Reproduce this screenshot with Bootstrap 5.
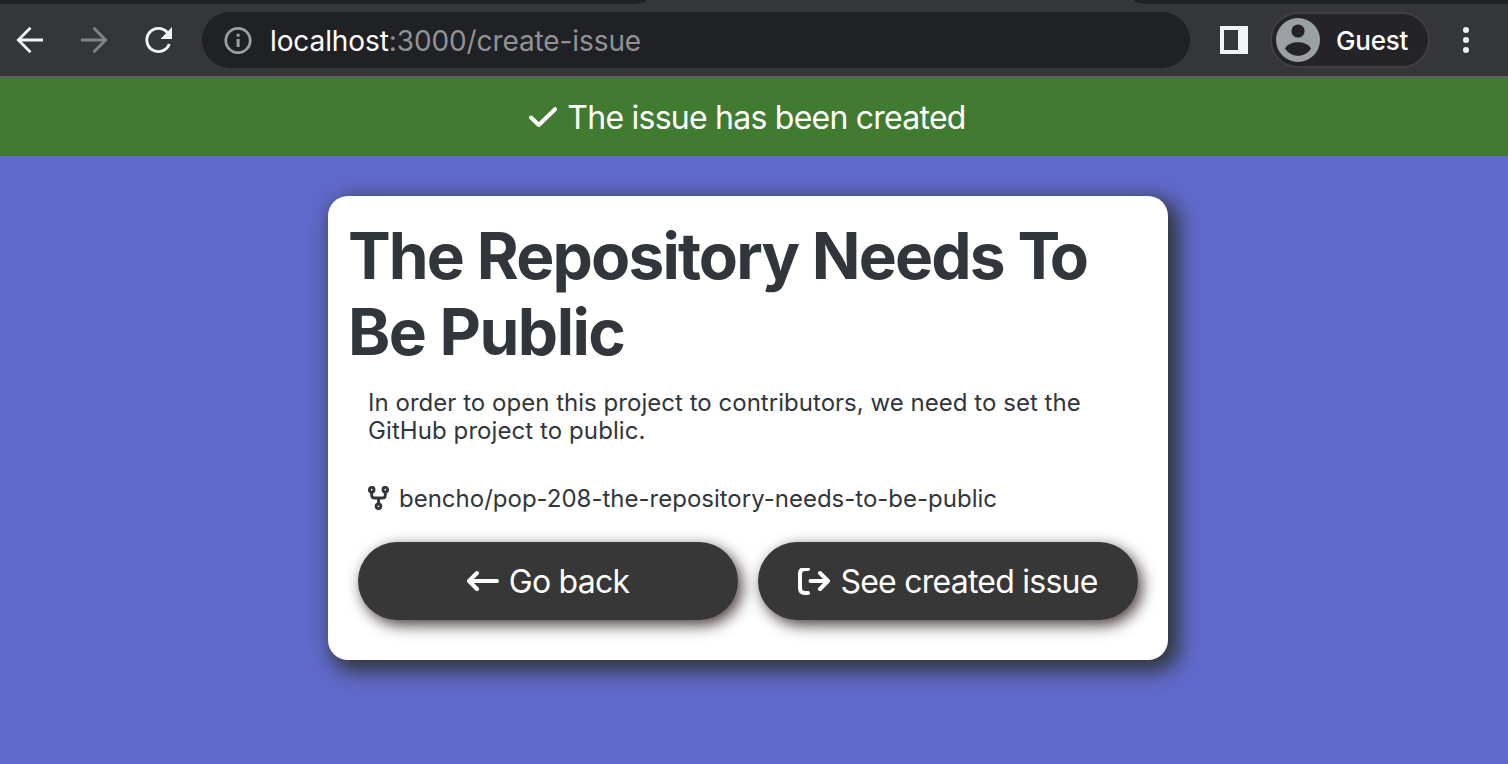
<!DOCTYPE html>
<html lang="en">
<head>
<meta charset="utf-8">
<title>Create issue</title>
<link rel="stylesheet" href="https://cdn.jsdelivr.net/npm/bootstrap@5.3.0/dist/css/bootstrap.min.css">
<style>
body{background:#606aca;font-family:Inter,"Liberation Sans",sans-serif;height:764px}
svg{display:block;flex:none}
.tabstrip{height:4px;background:#35363a}
.tabstrip .side{background:#202124;height:4px}
.side-start{width:646px;border-bottom-right-radius:14px 4px}
.side-end{width:374px;border-bottom-left-radius:14px 4px}
.toolbar{height:74px;background:#35363a;border-bottom:2px solid #5f5f66;padding:8px 36px 0 16px}
.nav-gap{margin-left:36px}
.address{width:988px;height:56px;background:#202124;margin-left:28px;padding-left:22px;color:#919295;font-size:28px;line-height:56px}
.address .host{color:#fff}
.url{margin-left:18px;letter-spacing:-.1px;padding-top:1px}
.panel-icon{margin-left:30px}
.guest{width:160px;height:56px;background:#242328;border:2px solid #403f44;color:#fff;font-size:26px;margin-left:22px;padding-left:4px}
.guest span{margin-left:16px;font-weight:500;letter-spacing:-.2px}
.menu-icon{margin-left:33px}
.label-text{margin-left:10px;letter-spacing:-.76px}
.notice{height:78px;background:#407b31;color:#fff;font-size:32px;line-height:40px;padding:20px 13px 0 0}
.issue{width:840px;height:464px;margin:40px 0 0 328px;border:0;border-radius:20px;color:#30363b;box-shadow:7px 7px 20px 4px #30363b;padding:22px 20px 0}
.issue h1{font-size:64px;line-height:76px;font-weight:700;margin:0;letter-spacing:-1.85px;word-spacing:.4px}
.issue h1 .tight{letter-spacing:-10.500px}
.issue h1 .last-line{letter-spacing:-1.5px}
.issue p{font-size:24px;line-height:28px;margin:19px 0 0 20px;letter-spacing:.03px}
.issue p .last-line{letter-spacing:.08px}
.branch{font-size:24px;line-height:28px;margin:40px 0 0 20px}
.branch svg{margin-bottom:2px}
.branch span{margin-left:10px}
.actions{gap:20px;margin:29px 10px 0}
.action{width:380px;height:78px;background:#373737;color:#fff;font-size:32px;font-weight:400;border:0;box-shadow:4px 5px 15px #4a3c3c;padding:2px 0 0}
.action:hover{background:#444;color:#fff}
</style>
</head>
<body class="overflow-hidden">
<div class="tabstrip d-flex justify-content-between"><div class="side side-start"></div><div class="side side-end"></div></div>
<header class="toolbar d-flex align-items-start">
  <div class="d-flex align-items-center w-100">
    <svg width="28" height="28" fill="none" stroke="#f1f3f4" stroke-width="2.8"><path d="M27 14H3M14.500 1.800 2.300 14l12.200 12.200"/></svg>
    <svg class="nav-gap" width="28" height="28" fill="none" stroke="#828386" stroke-width="2.8"><path d="M1 14h24M13.500 1.800 25.700 14 13.500 26.200"/></svg>
    <svg class="nav-gap" width="30" height="30" fill="none" stroke="#f1f3f4" stroke-width="2.9"><path d="M23.300 7.500A11.600 11.600 0 1 0 25.300 19"/><path d="M28 2v12H16.500z" fill="#f1f3f4" stroke="none"/></svg>
    <div class="address rounded-pill d-flex align-items-center">
      <svg width="28" height="28"><circle cx="14" cy="14.500" r="12.200" fill="none" stroke="#9aa0a6" stroke-width="2.8"/><path d="M12.600 7.800h3v3h-3zM12.600 13h3v8h-3z" fill="#9aa0a6"/></svg>
      <div class="url"><span class="host">localhost</span>:3000/create-issue</div>
    </div>
    <svg class="panel-icon" width="28" height="28"><path fill="#f1f3f4" fill-rule="evenodd" d="M0 0h28v28H0zM4 4v20h14V4z"/></svg>
    <div class="guest rounded-pill d-flex align-items-center">
      <svg width="44" height="44"><circle cx="22" cy="22" r="22" fill="#9aa0a3"/><circle cx="22" cy="13" r="6.600" fill="#242328"/><path fill="#242328" d="M9 30.500C11.500 26 17 24.300 22 24.300s10.500 1.700 13 6.200C32.500 35 27 37.800 22 37.800S11.500 35 9 30.500z"/></svg>
      <span>Guest</span>
    </div>
    <svg class="menu-icon" width="6" height="28" fill="#f1f3f4"><circle cx="3" cy="4" r="3"/><circle cx="3" cy="14" r="3"/><circle cx="3" cy="24" r="3"/></svg>
  </div>
</header>
<div class="notice d-flex justify-content-center">
  <svg width="28" height="40" fill="none" stroke="#fff" stroke-width="4" stroke-linecap="round" stroke-linejoin="round"><path d="M2 19.500 9.800 27 26 11.200"/></svg>
  <span class="label-text">The issue has been created</span>
</div>
<main class="card issue">
  <h1>The Repository Needs <span class="tight">T</span>o <span class="last-line">Be Public</span></h1>
  <p>In order to open this project to contributors, we need to set the <span class="last-line">GitHub project to public.</span></p>
  <div class="branch d-flex align-items-center">
    <svg width="21" height="24" fill="none" stroke="#30363b" stroke-width="2.900"><circle cx="3.700" cy="3.700" r="2.300"/><circle cx="17.300" cy="3.700" r="2.300"/><circle cx="10.500" cy="20.300" r="2.300"/><path d="M3.700 6v3.200q0 2.800 2.800 2.800h8q2.800 0 2.800-2.800V6M10.500 12v6"/></svg>
    <span>bencho/pop-208-the-repository-needs-to-be-public</span>
  </div>
  <div class="actions d-flex">
    <button class="btn action rounded-pill d-flex align-items-center justify-content-center">
      <svg width="32" height="28" fill="none" stroke="#fff" stroke-width="4" stroke-linecap="round" stroke-linejoin="round"><path d="M30 13H2M10 5 2 13l8 8"/></svg>
      <span class="label-text">Go back</span>
    </button>
    <button class="btn action rounded-pill d-flex align-items-center justify-content-center">
      <svg width="32" height="28" fill="none" stroke="#fff" stroke-width="4" stroke-linecap="round" stroke-linejoin="round"><path d="M10 1H7Q2 1 2 6v14q0 5 5 5h3M12.500 13H30M22 5l8 8-8 8"/></svg>
      <span class="label-text">See created issue</span>
    </button>
  </div>
</main>
<script src="https://cdn.jsdelivr.net/npm/bootstrap@5.3.0/dist/js/bootstrap.bundle.min.js"></script>
</body>
</html>
